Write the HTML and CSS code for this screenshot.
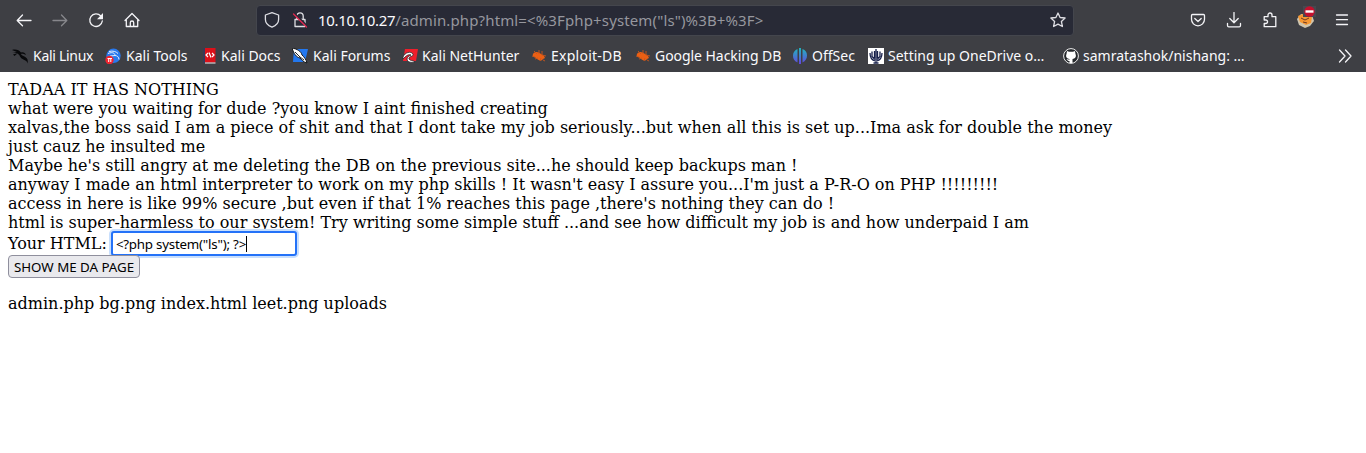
FILE: index.html
```html
<!DOCTYPE html>
<html lang="en">
<head>
<meta charset="utf-8">
<title>10.10.10.27/admin.php</title>
<link rel="stylesheet" href="styles.css">
</head>
<body>
<header class="chrome">
  <nav class="toolbar">
    <div class="nav-buttons">
      <svg class="icon" viewBox="0 0 16 16"><path d="M15 8.500H1.500M6.500 3 1.200 8.500l5.300 5.300"/></svg>
      <svg class="icon dim" viewBox="0 0 16 16"><path d="M1 8.500h13.500M9.500 3l5.300 5.500-5.300 5.300"/></svg>
      <svg class="icon" viewBox="0 0 16 16"><path d="M12.800 4A6.300 6.300 0 1 0 14.300 9"/><path class="solid" d="M15 1v6.200H9z"/></svg>
      <svg class="icon" viewBox="0 0 16 16"><path d="M1 8.500 8 1.500l7 7M2.300 7.500v7h11.400v-7M6.300 14.300v-3.600a1.700 1.700 0 0 1 3.400 0v3.600"/></svg>
    </div>
    <div class="urlbar">
      <svg class="icon" viewBox="0 0 16 16"><path d="M8 .7 14.600 3v4.500c0 3.500-3 6.300-6.600 7.700-3.600-1.400-6.600-4.200-6.600-7.700V3z"/></svg>
      <svg class="icon lock" viewBox="0 0 16 16"><path d="M4.800 7V4a3.200 3.200 0 0 1 6.400 0v3M3 7.500h10v7H3z"/><path class="gap" d="M2.500 1.500 15 14"/><path class="slash" d="M1.500 2l13 13"/></svg>
      <span class="url"><span class="host">10.10.10.27</span><span class="path">/admin.php?html=&lt;%3Fphp+system("ls")%3B+%3F&gt;</span></span>
      <svg class="icon" viewBox="0 0 16 16"><path d="m8 1 2.100 4.500 5 .5-3.700 3.500 1 5L8 12.100l-4.400 2.400 1-5L.9 6l5-.5z"/></svg>
    </div>
    <div class="actions">
      <svg class="icon" viewBox="0 0 16 16"><path d="M2.500 2.500h11q1 0 1 1v3.800a6.500 6.500 0 0 1-13 0V3.500q0-1 1-1zM4.800 6.500 8 9.500l3.200-3"/></svg>
      <svg class="icon" viewBox="0 0 16 16"><path d="M8 .5v10M3.800 6.500 8 10.700l4.200-4.200M1.500 11.500v2q0 1.300 1.300 1.300h10.400q1.300 0 1.300-1.300v-2"/></svg>
      <svg class="icon" viewBox="0 0 16 16"><path d="M2.200 8V4.700H6V3a2 2 0 0 1 4 0v1.700h3.800v10H2.200v-3.200h1.600a1.750 1.750 0 0 0 0-3.500z"/></svg>
      <svg class="fox" viewBox="0 0 20 22"><path d="m1 13 4-5 11 1 2 6-4 5-5 2-6-3z" fill="#cfc5ae"/><path d="m2 10 5-2 9 3-1 6-5 2-6-3z" fill="#f79832"/><path d="m5 12 4 2 4-2M7 16l4 1" fill="none" stroke="#6c3a24"/><path d="M7 0h13v11H7z" fill="#47484f"/><circle cx="13.500" cy="5.500" r="5.200" fill="#c5102d"/><path d="M9.500 4.300h8v2.400h-8z" fill="#fff"/></svg>
      <svg class="icon" viewBox="0 0 16 16"><path d="M2.500 3h11M2.500 7.700h11M2.500 12.500h11"/></svg>
    </div>
  </nav>
  <nav class="bookmarks">
    <span class="mark tight"><svg viewBox="0 0 16 16"><path d="M0 2c4-1 7 0 9 2.500 3-.5 4 .5 5 2.500-2-1-4-1.500-5-1 .5 2 5 2 6.500 5.500l.5 4C14 11 9.500 12 8 8.500 7 6 5 4.500 0 4.500L5 4zM1 6.500 6 5 2.500 8zM5 .5 9 3" fill="#08090b"/></svg>Kali Linux</span>
    <span class="mark"><svg viewBox="0 0 16 16"><circle cx="8.500" cy="7.800" r="7.200" fill="#2979ed"/><path d="M3 5.500c5-2 7 0 7 2 2 0 4 1.500 4 4M5 8l5-.5M4 3.500c4-1 7 0 9 2" fill="none" stroke="#e4efff"/><circle cx="4.500" cy="12" r="4.200" fill="#ef2530"/><path d="M2.500 10.500h4.500M3.700 10.500V14M5.800 10.500V14" stroke="#fff"/></svg>Kali Tools</span>
    <span class="mark near"><svg viewBox="0 0 16 16"><path d="M2 0h3v15H2z" fill="#363a59"/><path d="M4 0h10.500v14.500H4z" fill="#dc1019"/><path d="M4 15h10.500" stroke="#eee"/><path d="m7 5-2 2 2 2m4-4 2 2-2 2M8 4.500l2 5" fill="none" stroke="#fff" stroke-width="1.200"/></svg>Kali Docs</span>
    <span class="mark"><svg viewBox="0 0 16 16"><path d="M2 1h14l-3 13H1z" fill="#2378ef"/><path d="M0 0c5 1 9 3 10 7 2 2 4 4 5 8-4-1-6-4-7-5-4-1-6-4-8-10z" fill="#fff" stroke="#151719"/><path d="m3 4 5 5 4 3" fill="none" stroke="#222"/></svg>Kali Forums</span>
    <span class="mark near"><svg viewBox="0 0 16 16"><path d="M3 1h13l-2 12H1z" fill="#ee1f2c"/><path d="M1 9c2-5 8-6 10-3 1 3-5 2-4 5 1 2 4 1 6 3-4 1-8 0-8-3 0-2 2-3 4-4-3-1-5 1-8 4z" fill="#fff" stroke="#28282d" stroke-width=".8"/></svg>Kali NetHunter</span>
    <span class="mark near wide"><svg viewBox="0 0 16 16"><use href="#bug"/></svg>Exploit-DB</span>
    <span class="mark near snug"><svg viewBox="0 0 16 16"><g id="bug"><path d="M2 6c2-3 6-2 8 0l3 2 1 2-2 1c-2 3-5 1-7-1-2-1-4-2-3-4z" fill="#ec5f13"/><path d="M1 8 4 9M3 3l3 3M8 2v4M11 3v4l4 1M4 11l3-1M9 13l1-3M12 12l2 1" fill="none" stroke="#c9561b" stroke-width=".9"/></g></svg>Google Hacking DB</span>
    <span class="mark near"><svg viewBox="0 0 16 16"><defs><linearGradient id="off" x2="0" y2="1"><stop stop-color="#20b6bd"/><stop offset="1" stop-color="#6345dc"/></linearGradient></defs><path d="M5.500 1v13.500C2 13 1 10.500 1 7.500S3 2 5.500 1zM7 0h2v16H7zM10.500 1c3 1 4.500 3.500 4.500 6.500s-1.500 5.500-4.500 7z" fill="url(#off)"/></svg>OffSec</span>
    <span class="mark near"><svg viewBox="0 0 16 16"><path d="M0 0h16v16H0z" fill="#fff"/><path d="M8 1v14M6.500 3v7M9.500 3v7M4 3.500v5l3 3M12 3.500v5l-3 3M2 5c0 5 2 7 5 8M14 5c0 5-2 7-5 8M5.500 15h5" fill="none" stroke="#17204b" stroke-width="1.300"/></svg>Setting up OneDrive o…</span>
    <span class="mark near"><svg viewBox="0 0 16 16"><circle cx="8" cy="8" r="7.400" fill="#24272b" stroke="#eee"/><path d="m4 3 2 .8h4L12 3l.5 3c1.200 3-.5 4.800-3 5v4h-3v-2c-2 .3-2-1-3-2l3 .8V11c-2.500-.2-4.200-2-3-5z" fill="#fff"/></svg>samratashok/nishang: …</span>
    <svg class="icon more" viewBox="0 0 16 16"><path d="m2.500 2 5.500 6-5.500 6m6-12 5.500 6-5.500 6"/></svg>
  </nav>
</header>
<main class="page">
  <p class="story">TADAA IT HAS NOTHING<br>
  what were you waiting for dude ?you know I aint finished creating<br>
  xalvas,the boss said I am a piece of shit and that I dont take my job seriously...but when all this is set up...Ima ask for double the money<br>
  just cauz he insulted me<br>
  Maybe he's still angry at me deleting the DB on the previous site...he should keep backups man !<br>
  anyway I made an html interpreter to work on my php skills ! It wasn't easy I assure you...I'm just a P-R-O on PHP !!!!!!!!!<br>
  access in here is like 99% secure ,but even if that 1% reaches this page ,there's nothing they can do !<br>
  html is super-harmless to our system! Try writing some simple stuff ...and see how difficult my job is and how underpaid I am</p>
  <form class="form">
    <div class="row"><span>Your HTML:</span><div class="field"><span>&lt;?php system("ls"); ?&gt;</span><i class="caret"></i></div></div>
    <button class="submit" type="button">SHOW ME DA PAGE</button>
  </form>
  <p class="output">admin.php bg.png index.html leet.png uploads</p>
</main>
</body>
</html>
```
FILE: styles.css
```css
* { box-sizing: border-box; }
body { margin: 0; background: #fff; color: #000; font: 16px/19px "DejaVu Serif", serif; overflow: hidden; }
.chrome { height: 72px; background: #3e3f44; color: #fbfbfe; font-family: "Noto Sans", sans-serif; }
.toolbar { display: flex; height: 40px; padding: 0 16px; align-items: center; }
.nav-buttons, .actions { display: flex; gap: 20px; align-items: center; }
.nav-buttons { width: 240px; }
.icon { width: 16px; height: 16px; flex: none; fill: none; stroke: #f4f4f7; stroke-width: 1.3; stroke-linejoin: round; stroke-linecap: round; }
.dim { opacity: .4; }
.solid { fill: #f4f4f7; stroke: none; }
.urlbar { display: flex; width: 818px; height: 31px; padding: 0 7px; align-items: center; background: #282a36; border: 1px solid #44464d; border-radius: 4px; }
.urlbar .icon { stroke: #dedee3; }
.lock { margin-left: 12px; }
.urlbar .lock .gap { stroke: #282a36; stroke-width: 2; }
.urlbar .lock .slash { stroke: #e22850; }
.url { flex: 1; margin-left: 10px; font-size: 15px; line-height: 20px; white-space: nowrap; }
.host { letter-spacing: -.32px; }
.path { color: #96979e; letter-spacing: .13px; }
.actions { margin-left: 116px; }
.fox { width: 20px; height: 22px; margin: -6px -2px 0; flex: none; }
.bookmarks { display: grid; grid-template-columns: 93px 96px 91px 110px 129px 104px 157px 76px 195px 274px 16px; height: 32px; padding-left: 12px; align-items: center; font-size: 14px; }
.mark { display: flex; gap: 5px; align-items: center; white-space: nowrap; line-height: 20px; }
.mark svg { width: 16px; height: 16px; flex: none; }
.near { gap: 4px; }
.tight { letter-spacing: -.28px; }
.snug { letter-spacing: -.05px; }
.wide { letter-spacing: .25px; }
.page { padding: 8px; }
.story, .output { margin: 0; white-space: nowrap; }
.row { display: flex; height: 23px; align-items: center; gap: 4px; }
.field { display: flex; width: 186px; height: 25px; padding: 0 3px; align-items: center; background: #fff; border: 2px solid #2472f8; border-radius: 3px; box-shadow: 0 0 0 2px #c8dffd; font: 13.333px/18px "Noto Sans", sans-serif; letter-spacing: -.22px; white-space: nowrap; }
.caret { width: 1px; height: 16px; background: #000; }
.submit { display: block; position: relative; width: 132px; height: 23px; padding: 0; background: #e9e9ed; border: 1px solid #8f8f9d; border-radius: 4px; color: #000; font: 13.333px/18px "Noto Sans", sans-serif; letter-spacing: -.03px; white-space: nowrap; }
.output { margin-top: 16px; }
```
